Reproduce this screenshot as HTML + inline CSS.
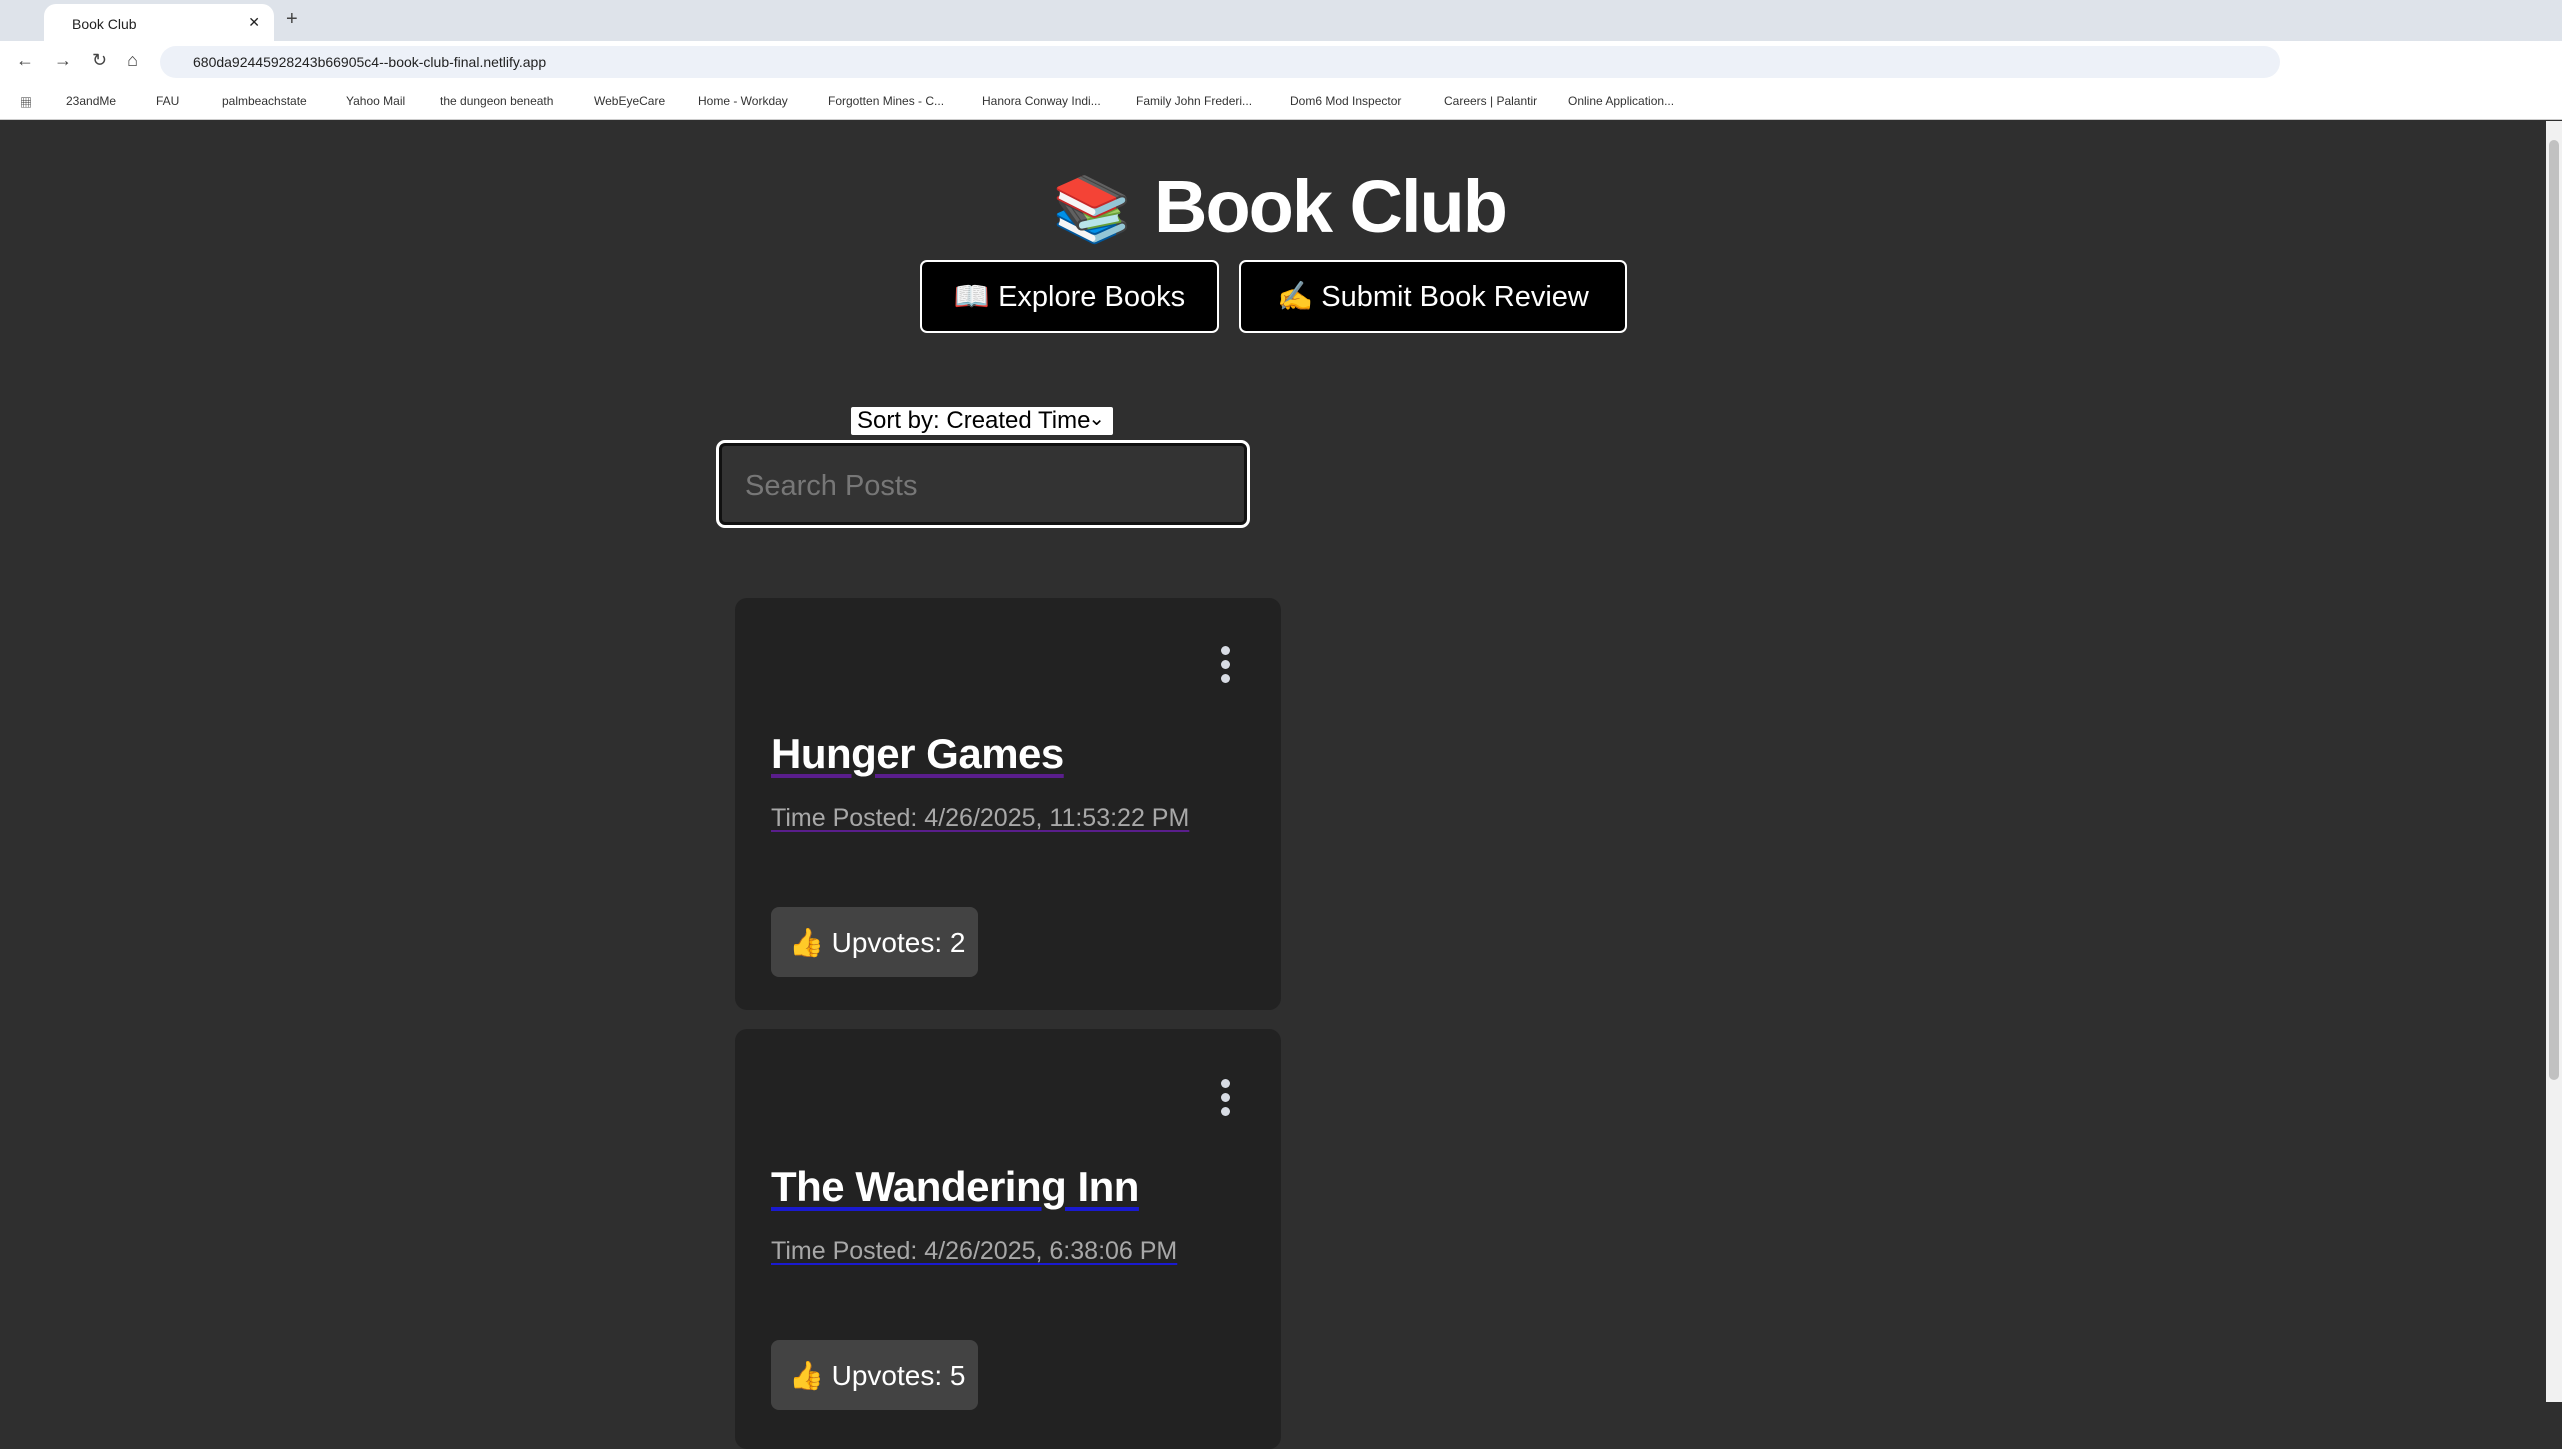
<!DOCTYPE html>
<html><head><meta charset="utf-8"><style>
*{box-sizing:border-box;margin:0;padding:0}
body{width:2562px;height:1402px;overflow:hidden;background:#2f2f2f;font-family:"Liberation Sans","Noto Sans CJK SC",sans-serif;position:relative}
.abs{position:absolute}
#tabs{left:0;top:0;width:2562px;height:41px;background:#dee3ea}
#tab{left:44px;top:4px;width:230px;height:37px;background:#fff;border-radius:12px 12px 0 0;font-size:14px;color:#222;padding:12px 0 0 28px}
#bar{left:0;top:41px;width:2562px;height:41px;background:#fff}
#omni{left:160px;top:46px;width:2120px;height:32px;border-radius:16px;background:#edf1f8;font-size:14px;color:#222;padding:8px 0 0 33px}
#bm{left:0;top:82px;width:2562px;height:38px;background:#fff;border-bottom:1px solid #ccc;font-size:12px;color:#333}
#bm span{position:absolute;top:12px}
#scroll{left:2546px;top:121px;width:16px;height:1281px;background:#f1f1f1}
#thumb{left:2549px;top:140px;width:10px;height:940px;background:#c1c1c1;border-radius:5px}
h1{position:absolute;left:1154px;top:164px;font-size:74px;color:#fff;font-weight:bold;letter-spacing:-2px}
.btn{position:absolute;top:260px;height:73px;background:#000;border:2px solid #fff;border-radius:7px;color:#fff;font-size:29px;display:flex;align-items:center;justify-content:center}
#sort{left:851px;top:407px;width:262px;height:28px;background:#fff;font-size:24px;color:#000;padding:0 0 0 6px;line-height:28px;border-radius:2px}
#search{left:716px;top:440px;width:534px;height:88px;border:3px solid #fff;border-radius:9px;background:#333;box-shadow:inset 0 0 0 3px #111;font-size:29px;color:#777;padding:27px 0 0 26px}
.card{position:absolute;left:735px;width:546px;background:#222;border-radius:12px}
.dots{position:absolute;left:486px;top:48px;width:10px}
.dots i{display:block;width:9px;height:9px;border-radius:50%;background:#d8dce4;margin-bottom:5px}
.title{position:absolute;left:36px;font-size:42px;font-weight:bold;color:#fff;text-decoration:underline;text-decoration-color:#5a1e8c;text-decoration-thickness:4px;text-underline-offset:6px;letter-spacing:-0.5px}
.time{position:absolute;left:36px;font-size:25px;color:#a8a8a8;text-decoration:underline;text-decoration-color:#5a1e8c;text-underline-offset:4px}
.up{position:absolute;left:36px;width:207px;height:70px;background:#434343;border-radius:8px;color:#fff;font-size:28px;display:flex;align-items:center;padding-left:18px}
</style></head><body>
<div class="abs" id="tabs"></div>
<div class="abs" id="tab">Book Club<span style="position:absolute;right:14px;top:10px">✕</span></div>
<div class="abs" style="left:286px;top:8px;font-size:20px;color:#444">+</div>
<div class="abs" id="bar"></div>
<div class="abs" style="left:16px;top:50px;font-size:18px;color:#444;letter-spacing:20px">←→↻⌂</div>
<div class="abs" id="omni">680da92445928243b66905c4--book-club-final.netlify.app</div>
<div class="abs" id="bm">
<span style="left:20px">▦</span><span style="left:66px">23andMe</span><span style="left:156px">FAU</span><span style="left:222px">palmbeachstate</span><span style="left:346px">Yahoo Mail</span><span style="left:440px">the dungeon beneath</span><span style="left:594px">WebEyeCare</span><span style="left:698px">Home - Workday</span><span style="left:828px">Forgotten Mines - C...</span><span style="left:982px">Hanora Conway Indi...</span><span style="left:1136px">Family John Frederi...</span><span style="left:1290px">Dom6 Mod Inspector</span><span style="left:1444px">Careers | Palantir</span><span style="left:1568px">Online Application...</span></div>
<div class="abs" id="scroll"></div><div class="abs" id="thumb"></div>
<div class="abs" style="left:1052px;top:172px;font-size:64px">📚</div>
<h1>Book Club</h1>
<div class="btn" style="left:920px;width:299px">📖&nbsp;Explore Books</div>
<div class="btn" style="left:1239px;width:388px">✍️&nbsp;Submit Book Review</div>
<div class="abs" id="sort">Sort by: Created Time<span style="position:absolute;right:8px;top:-2px;font-size:20px">⌄</span></div>
<div class="abs" id="search">Search Posts</div>
<div class="card" style="top:598px;height:412px">
<div class="dots"><i></i><i></i><i></i></div>
<div class="title" style="top:132px">Hunger Games</div>
<div class="time" style="top:206px">Time Posted: 4/26/2025, 11:53:22 PM</div>
<div class="up" style="top:309px">👍&nbsp;Upvotes: 2</div>
</div>
<div class="card" style="top:1029px;height:420px">
<div class="dots" style="top:50px"><i></i><i></i><i></i></div>
<div class="title" style="top:134px;text-decoration-color:#1a1ad0">The Wandering Inn</div>
<div class="time" style="top:208px;text-decoration-color:#1a1ad0">Time Posted: 4/26/2025, 6:38:06 PM</div>
<div class="up" style="top:311px">👍&nbsp;Upvotes: 5</div>
</div>
</body></html>
